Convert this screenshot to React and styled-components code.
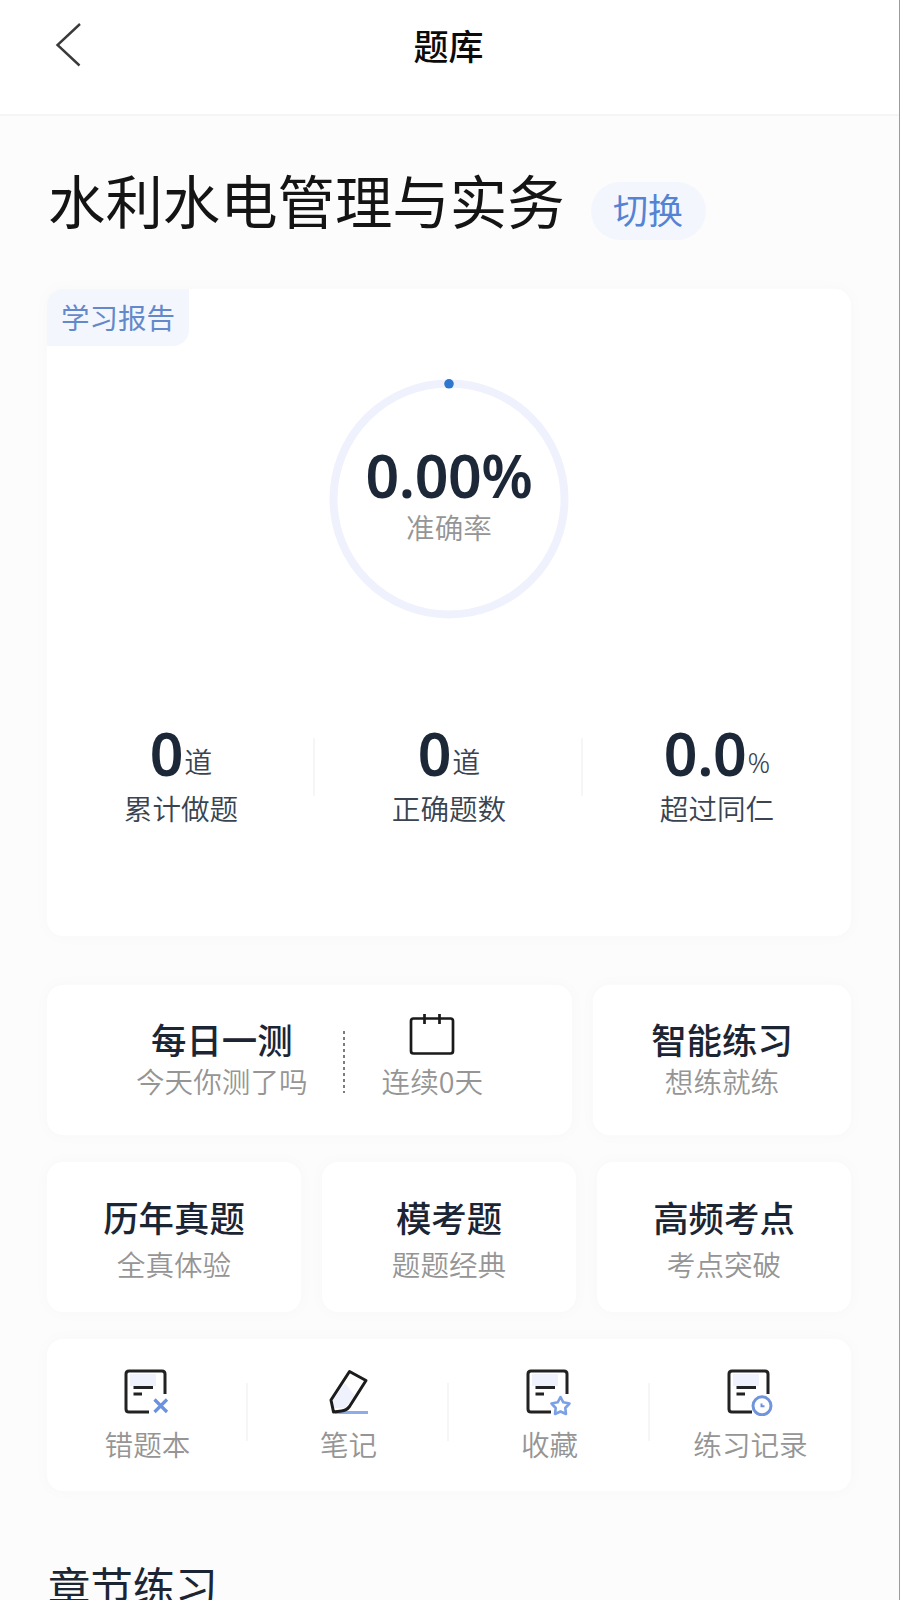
import React from "react";
import styled, {createGlobalStyle} from "styled-components";

const GlobalStyle = createGlobalStyle`
  body {
    margin: 0;
    background-color: #fcfcfc;
    font-family: "Noto Sans CJK SC", sans-serif;
    color: #1c2533;
  }

  svg {
    display: block;
  }
`

const AppContainer = styled.div`
  display: flex;
  box-sizing: border-box;
  flex-direction: column;
  width: 900px;
  height: 1600px;
  overflow: hidden;
  border-right: 1px solid #9b9b9b;
  background-color: #fcfcfc;
`

const Header = styled.header`
  display: grid;
  box-sizing: border-box;
  flex: none;
  grid-template-columns: 1fr auto 1fr;
  align-items: center;
  height: 116px;
  padding: 0 57px 24px 55px;
  border-bottom: 2px solid #f5f5f5;
  background-color: #ffffff;
`

const HeaderTitle = styled.h1`
  margin: 0;
  font-size: 35px;
  font-weight: 500;
  line-height: 50px;
  color: #0b0b0b;
`

const Subject = styled.div`
  display: flex;
  box-sizing: border-box;
  flex: none;
  align-items: flex-start;
  height: 173px;
  padding: 53px 0 0 48px;
`

const SubjectName = styled.h2`
  margin: 0;
  font-size: 57.4px;
  font-weight: 400;
  line-height: 60px;
  color: #141414;
`

const SwitchBtn = styled.button`
  width: 115px;
  height: 58px;
  margin: 13px 0 0 26px;
  padding: 0 0 5px 0;
  border: none;
  border-radius: 29px;
  background-color: #f4f6fe;
  font-family: inherit;
  font-size: 35px;
  line-height: 53px;
  color: #5583d4;
`

const Body = styled.main`
  display: flex;
  flex-direction: column;
  padding: 0 48px 0 47px;
`

const Card = styled.section`
  box-sizing: border-box;
  border-radius: 16px;
  background-color: #ffffff;
  box-shadow: 0 0 16px 2px rgb(0 0 0 / 2%);
`

const ReportCard = styled(Card)`
  display: flex;
  flex-direction: column;
  align-items: center;
  height: 647px;
  margin-bottom: 49px;
`

const ReportTag = styled.div`
  box-sizing: border-box;
  align-self: flex-start;
  width: 142px;
  height: 57px;
  padding-left: 14px;
  border-radius: 16px 0 16px 0;
  background-color: #f4f6fe;
  font-size: 28.5px;
  line-height: 56px;
  color: #6389ca;
`

const Gauge = styled.div`
  display: grid;
  width: 240px;
  height: 240px;
  margin-top: 33px;

  & > * {
    grid-area: 1 / 1;
  }
`

const GaugeText = styled.div`
  display: flex;
  flex-direction: column;
  align-items: center;
  padding-top: 66px;
`

const BigNumber = styled.strong`
  font-family: "Noto Sans", sans-serif;
  font-size: 59px;
  font-weight: 600;
  line-height: 60px;
  letter-spacing: -.4px;
  color: #1c2738;
`

const Caption = styled.span`
  margin-top: ${props => props.$gap || 0}px;
  font-size: 28.6px;
  font-weight: 350;
  line-height: 32px;
  color: ${props => props.$dark ? "#3a4350" : "#959595"};
`

const Columns = styled.div`
  display: grid;
  width: 100%;
  grid-template-columns: repeat(${props => props.$count}, 1fr);
`

const Column = styled.div`
  display: flex;
  flex-direction: column;
  align-items: center;
  background: linear-gradient(#f6f6f6, #f6f6f6) no-repeat right ${props => props.$lineTop}px / 2px 58px;

  &:last-child {
    background: none;
  }
`

const Stats = styled(Columns)`
  margin-top: 104px;
`

const StatValue = styled.div`
  display: flex;
  align-items: flex-end;
  height: 60px;
`

const Unit = styled.span`
  padding: 0 0 5px 1px;
  font-family: "Noto Sans", "Noto Sans CJK SC", sans-serif;
  font-size: 28px;
  font-weight: 350;
  line-height: 32px;
  color: #3a4350;
`

const Row = styled.div`
  display: grid;
  grid-template-columns: ${props => props.$cols};
  gap: 21px;
  margin-bottom: 27px;
`

const Tile = styled(Card)`
  display: flex;
  flex-direction: column;
  align-items: center;
  height: 150px;
  padding-top: ${props => props.$top}px;
`

const DailyTile = styled(Card)`
  display: flex;
  height: 150px;
  padding: 29px 0 0 89px;
`

const TileTitle = styled.h3`
  margin: 0;
  font-size: 35.4px;
  font-weight: 500;
  line-height: 50px;
  color: #1c2533;
`

const TileText = styled.div`
  display: flex;
  flex-direction: column;
  align-items: center;
`

const DashedLine = styled.i`
  width: 2px;
  height: 62px;
  margin: 17px 37px 0 35px;
  background: repeating-linear-gradient(#7c7c7c 0 3px, transparent 3px 6px);
`

const Tools = styled(Card)`
  height: 152px;
`

const SectionTitle = styled.h2`
  margin: 69px 0 0 1px;
  font-size: 42.4px;
  font-weight: 400;
  line-height: 50px;
  color: #1c2533;
`

const ToolIcon = styled.svg`
  margin: 29px ${props => props.$pull || 0}px 0 0;
`

const stats = [
    {value: "0", unit: "道", label: "累计做题"},
    {value: "0", unit: "道", label: "正确题数"},
    {value: "0.0", unit: "%", label: "超过同仁"},
]

const tiles = [
    {title: "历年真题", text: "全真体验"},
    {title: "模考题", text: "题题经典"},
    {title: "高频考点", text: "考点突破"},
]

function BackIcon() {
    return (
        <svg width="26" height="44" viewBox="0 0 26 44" fill="none" stroke="#3a3a3a" strokeWidth="2.4">
            <path d="M25 1L2.5 22L24.5 42.5"/>
        </svg>
    );
}

function CalendarIcon() {
    return (
        <svg width="46" height="42" viewBox="0 0 46 42" fill="none" stroke="#1a1a1a" strokeWidth="2.7">
            <rect x="2" y="4.5" width="42" height="35" rx="2.5"/>
            <path d="M15.5 0V10M30.5 0V10"/>
        </svg>
    );
}

// page outline shared by three of the tools, the badge goes in its lower right corner
function NoteIcon({children}) {
    return (
        <ToolIcon $pull={2} width="48" height="48" viewBox="0 0 48 48" fill="none">
            <rect x="7" y="6" width="26" height="12" fill="#eff1fd"/>
            <path d="M42 26V6Q42 3 39 3H6Q3 3 3 6V41Q3 44 6 44H26" stroke="#222222" strokeWidth="3"/>
            <path d="M10.5 19.5H30M10.5 26H19" stroke="#222222" strokeWidth="2.8"/>
            {children}
        </ToolIcon>
    );
}

function PenIcon() {
    return (
        <ToolIcon width="48" height="48" viewBox="0 0 48 48" fill="none">
            <path d="M20 15L30 28L20 40L9 40L8 31Z" fill="#eff1fd"/>
            <path d="M10 44.5H43" stroke="#8eace8" strokeWidth="3"/>
            <path d="M24.5 3.5L41 12.5L24.5 38.5Q21.5 42.5 16.5 43L8.5 44L6 32Z" stroke="#1c1c1c" strokeWidth="3" strokeLinejoin="round"/>
        </ToolIcon>
    );
}

const tools = [
    {
        label: "错题本",
        icon: <NoteIcon><path d="M31.5 31.5L44 44M44 31.5L31.5 44" stroke="#6a92de" strokeWidth="3.2"/></NoteIcon>,
    },
    {
        label: "笔记",
        icon: <PenIcon/>,
    },
    {
        label: "收藏",
        icon: (
            <NoteIcon>
                <path
                    d="M35.5 29L38.3 34.3L44.5 35.5L40.3 40L41 46L35.5 43.5L30 46L30.7 40L26.5 35.5L32.7 34.3Z"
                    stroke="#7ba0e6"
                    strokeWidth="2.6"
                    strokeLinejoin="round"
                />
            </NoteIcon>
        ),
    },
    {
        label: "练习记录",
        icon: (
            <NoteIcon>
                <circle cx="36" cy="37.8" r="9" fill="#ffffff" stroke="#7095dc" strokeWidth="3"/>
                <path d="M35.5 35.5V38.3H38.5" stroke="#6a92de" strokeWidth="2"/>
            </NoteIcon>
        ),
    },
]

function App() {

    return (
        <AppContainer>
            <GlobalStyle/>
            <Header>
                <BackIcon/>
                <HeaderTitle>题库</HeaderTitle>
            </Header>

            <Subject>
                <SubjectName>水利水电管理与实务</SubjectName>
                <SwitchBtn>切换</SwitchBtn>
            </Subject>

            <Body>
                <ReportCard>
                    <ReportTag>学习报告</ReportTag>
                    <Gauge>
                        <svg width="240" height="240" viewBox="0 0 240 240" fill="none">
                            <circle cx="120" cy="120" r="115.5" stroke="#eff2fd" strokeWidth="8"/>
                            <circle cx="120" cy="4.8" r="4.8" fill="#2f76cf"/>
                        </svg>
                        <GaugeText>
                            <BigNumber>0.00%</BigNumber>
                            <Caption $gap={6}>准确率</Caption>
                        </GaugeText>
                    </Gauge>
                    <Stats $count={3}>
                        {stats.map(item => (
                            <Column key={item.label} $lineTop={15}>
                                <StatValue>
                                    <BigNumber>{item.value}</BigNumber>
                                    <Unit>{item.unit}</Unit>
                                </StatValue>
                                <Caption $dark $gap={9}>{item.label}</Caption>
                            </Column>
                        ))}
                    </Stats>
                </ReportCard>

                <Row $cols="525px 1fr">
                    <DailyTile>
                        <TileText>
                            <TileTitle>每日一测</TileTitle>
                            <Caption $gap={1}>今天你测了吗</Caption>
                        </TileText>
                        <DashedLine/>
                        <TileText>
                            <CalendarIcon/>
                            <Caption $gap={9}>连续0天</Caption>
                        </TileText>
                    </DailyTile>
                    <Tile $top={29}>
                        <TileTitle>智能练习</TileTitle>
                        <Caption $gap={1}>想练就练</Caption>
                    </Tile>
                </Row>

                <Row $cols="repeat(3, 1fr)">
                    {tiles.map(item => (
                        <Tile key={item.title} $top={30}>
                            <TileTitle>{item.title}</TileTitle>
                            <Caption $gap={6}>{item.text}</Caption>
                        </Tile>
                    ))}
                </Row>

                <Tools>
                    <Columns $count={4}>
                        {tools.map(item => (
                            <Column key={item.label} $lineTop={44}>
                                {item.icon}
                                <Caption $gap={12}>{item.label}</Caption>
                            </Column>
                        ))}
                    </Columns>
                </Tools>

                <SectionTitle>章节练习</SectionTitle>
            </Body>
        </AppContainer>
    );
}

export default App;
